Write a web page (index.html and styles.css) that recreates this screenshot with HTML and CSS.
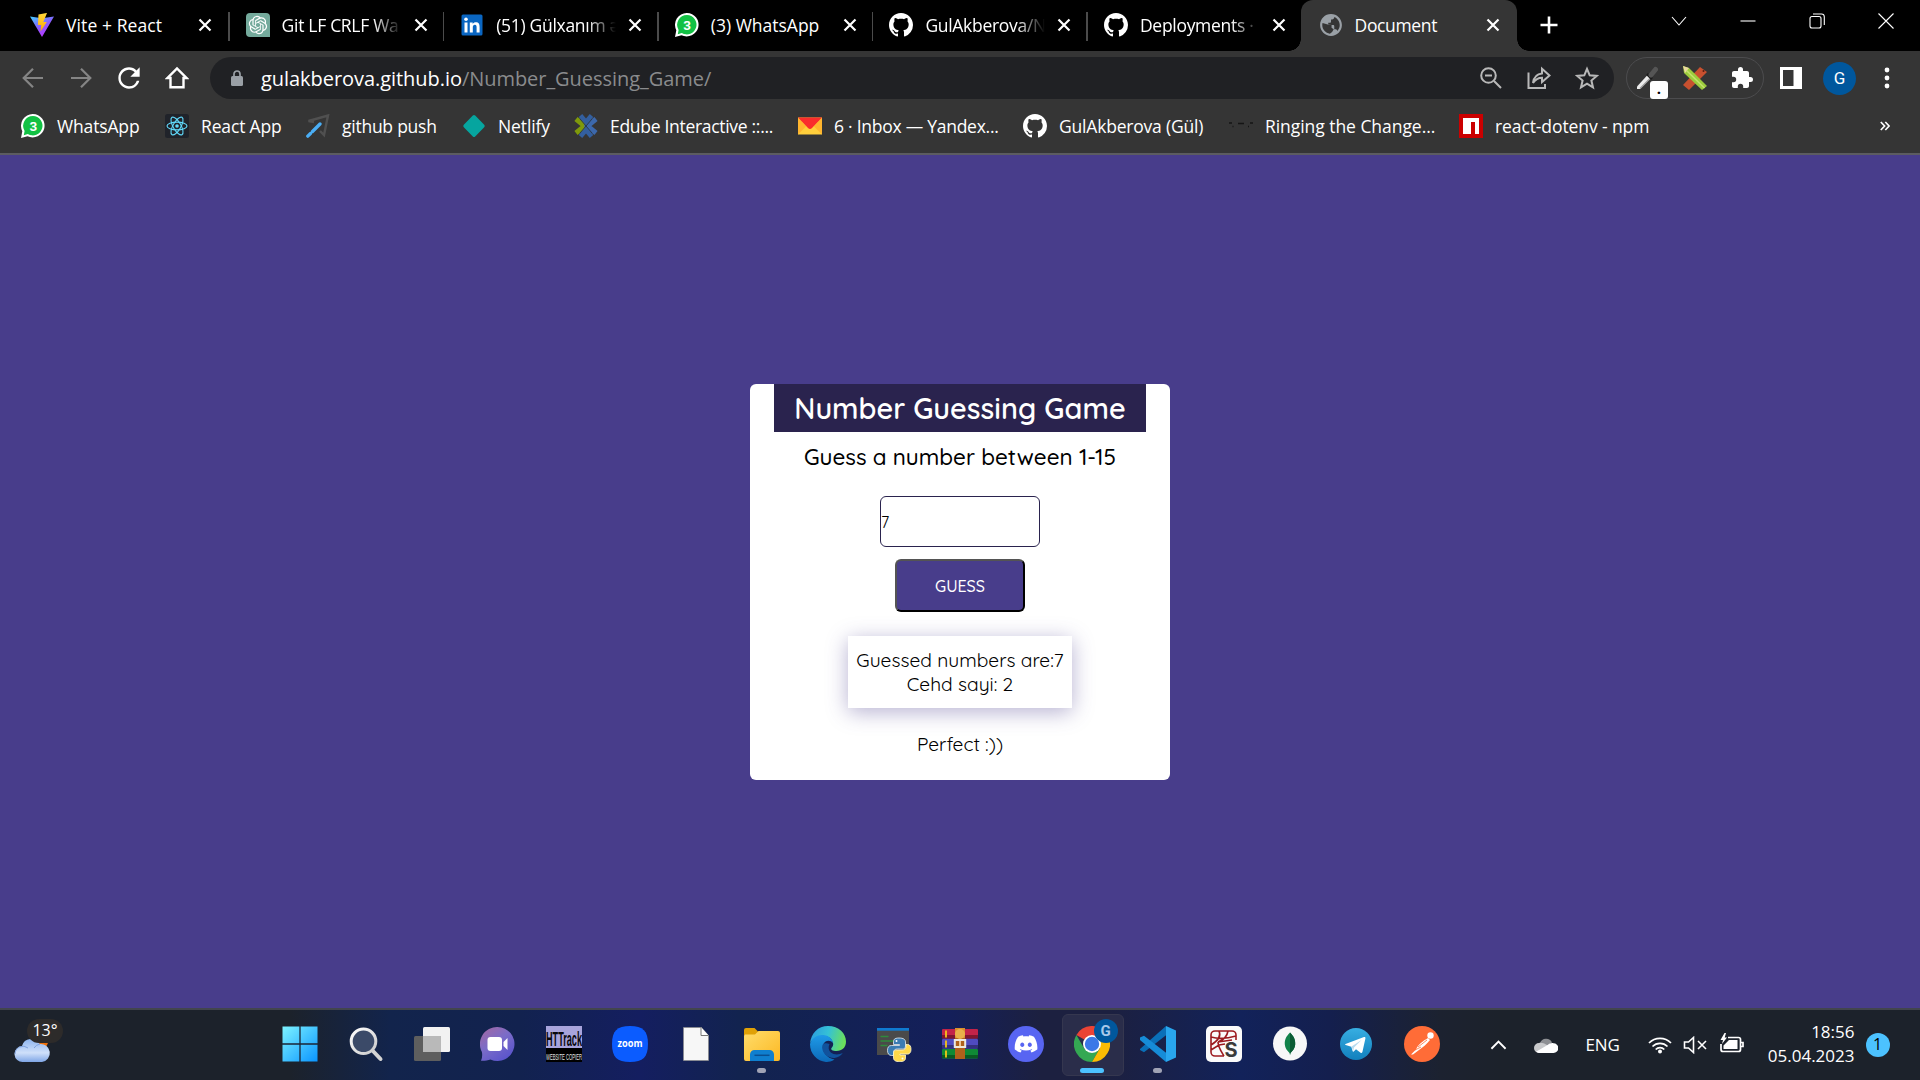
FILE: index.html
```html
<!DOCTYPE html>
<html lang="en">
<head>
<meta charset="utf-8">
<title>Document</title>
<link rel="stylesheet" href="styles.css">
</head>
<body>
<svg class="defs" aria-hidden="true">
  <defs>
    <linearGradient id="g-vite" x1="0" y1="0" x2="0.6" y2="1"><stop offset="0" stop-color="#41d1ff"/><stop offset="0.55" stop-color="#8a5cff"/><stop offset="1" stop-color="#bd34fe"/></linearGradient>
    <linearGradient id="g-bolt" x1="0" y1="0" x2="0" y2="1"><stop offset="0" stop-color="#ffd83a"/><stop offset="1" stop-color="#ffa800"/></linearGradient>
    <linearGradient id="g-win" x1="0" y1="0" x2="1" y2="1"><stop offset="0" stop-color="#7df3ff"/><stop offset="1" stop-color="#0a95ff"/></linearGradient>
    <linearGradient id="g-chat" x1="0" y1="0" x2="0.7" y2="1"><stop offset="0" stop-color="#a5679f"/><stop offset="0.5" stop-color="#7b6cc8"/><stop offset="1" stop-color="#5a54cc"/></linearGradient>
    <linearGradient id="g-folder" x1="0" y1="0" x2="1" y2="1"><stop offset="0" stop-color="#ffdd6b"/><stop offset="1" stop-color="#fcb823"/></linearGradient>
    <linearGradient id="g-edge" x1="0" y1="0.2" x2="1" y2="0.4"><stop offset="0" stop-color="#2a9be0"/><stop offset="0.5" stop-color="#35c1d6"/><stop offset="1" stop-color="#6be05a"/></linearGradient>
    <linearGradient id="g-edge2" x1="0" y1="0" x2="0" y2="1"><stop offset="0" stop-color="#1f9be8"/><stop offset="1" stop-color="#0c69b8"/></linearGradient>
    <linearGradient id="g-tele" x1="0" y1="0" x2="0" y2="1"><stop offset="0" stop-color="#37aee2"/><stop offset="1" stop-color="#1280bd"/></linearGradient>
    <linearGradient id="g-cloud" x1="0" y1="0" x2="0" y2="1"><stop offset="0" stop-color="#8db4ee"/><stop offset="0.6" stop-color="#cfe0fa"/><stop offset="1" stop-color="#7fa6e6"/></linearGradient>
    <linearGradient id="g-lens" x1="0" y1="0" x2="1" y2="1"><stop offset="0" stop-color="#ffffff"/><stop offset="1" stop-color="#c9c9c9"/></linearGradient>
  </defs>
  <symbol id="i-github" viewBox="0 0 16 16"><path fill="#fff" d="M8 0C3.58 0 0 3.58 0 8c0 3.54 2.29 6.53 5.47 7.59.4.07.55-.17.55-.38 0-.19-.01-.82-.01-1.49-2.01.37-2.53-.49-2.69-.94-.09-.23-.48-.94-.82-1.13-.28-.15-.68-.52-.01-.53.63-.01 1.08.58 1.23.82.72 1.21 1.87.87 2.33.66.07-.52.28-.87.51-1.07-1.78-.2-3.64-.89-3.64-3.95 0-.87.31-1.59.82-2.15-.08-.2-.36-1.02.08-2.12 0 0 .67-.21 2.2.82.64-.18 1.32-.27 2-.27s1.36.09 2 .27c1.53-1.04 2.2-.82 2.2-.82.44 1.1.16 1.92.08 2.12.51.56.82 1.27.82 2.15 0 3.07-1.87 3.75-3.65 3.95.29.25.54.73.54 1.48 0 1.07-.01 1.93-.01 2.2 0 .21.15.46.55.38A8.01 8.01 0 0 0 16 8c0-4.42-3.58-8-8-8z"/></symbol>
  <symbol id="i-whatsapp" viewBox="0 0 24 24"><path fill="#fff" d="M12 0a12 11.700 0 1 1-5.500 22.300L0 24l1.300-6.800A11.800 11.800 0 0 1 12 0z"/><path fill="#12c144" d="M12 2a9.800 9.700 0 1 1-5.200 18.100L2.800 21.200l.8-4.300A9.800 9.800 0 0 1 12 2z"/><text class="wa-count" x="12.200" y="17.200">3</text></symbol>
  <symbol id="i-close" viewBox="0 0 14 14"><path d="M1.500 1.500l11 11M12.500 1.500l-11 11" stroke="#fff" stroke-width="2.200" fill="none"/></symbol>
</svg>

<div class="screen">
  <header class="browser">
    <div class="tabstrip">
      <div class="tab first">
        <svg class="fav" viewBox="0 0 24 24"><path fill="url(#g-vite)" d="M0 3.500l12 1.800 12-1.800L12 24z"/><path fill="url(#g-bolt)" d="M16.500 0L8.500 1.500l-.6 10.500h3.300l-.7 6.500 6.300-9.500h-3.500L17 0z"/></svg>
        <span class="label vite">Vite + React</span><svg class="close"><use href="#i-close"/></svg>
      </div>
      <div class="tab">
        <svg class="fav" viewBox="0 0 24 24"><path fill="#74aa9c" d="M4 0h16a4 4 0 0 1 4 4v20H4a4 4 0 0 1-4-4V4a4 4 0 0 1 4-4z"/><g transform="translate(2.800 2.800) scale(.765)"><path fill="#fff" d="M22.2819 9.8211a5.9847 5.9847 0 0 0-.5157-4.9108 6.0462 6.0462 0 0 0-6.5098-2.9A6.0651 6.0651 0 0 0 4.9807 4.1818a5.9847 5.9847 0 0 0-3.9977 2.9 6.0462 6.0462 0 0 0 .7427 7.0966 5.98 5.98 0 0 0 .511 4.9107 6.051 6.051 0 0 0 6.5146 2.9001A5.9847 5.9847 0 0 0 13.2599 24a6.0557 6.0557 0 0 0 5.7718-4.2058 5.9894 5.9894 0 0 0 3.9977-2.9001 6.0557 6.0557 0 0 0-.7475-7.0729zm-9.022 12.6081a4.4755 4.4755 0 0 1-2.8764-1.0408l.1419-.0804 4.7783-2.7582a.7948.7948 0 0 0 .3927-.6813v-6.7369l2.02 1.1686a.071.071 0 0 1 .038.052v5.5826a4.504 4.504 0 0 1-4.4945 4.4944zm-9.6607-4.1254a4.4708 4.4708 0 0 1-.5346-3.0137l.142.0852 4.783 2.7582a.7712.7712 0 0 0 .7806 0l5.8428-3.3685v2.3324a.0804.0804 0 0 1-.0332.0615L9.74 19.9502a4.4992 4.4992 0 0 1-6.1408-1.6464zM2.3408 7.8956a4.485 4.485 0 0 1 2.3655-1.9728V11.6a.7664.7664 0 0 0 .3879.6765l5.8144 3.3543-2.0201 1.1685a.0757.0757 0 0 1-.071 0l-4.8303-2.7865A4.504 4.504 0 0 1 2.3408 7.872zm16.5963 3.8558L13.1038 8.364 15.1192 7.2a.0757.0757 0 0 1 .071 0l4.8303 2.7913a4.4944 4.4944 0 0 1-.6765 8.1042v-5.6772a.79.79 0 0 0-.407-.667zm2.0107-3.0231l-.142-.0852-4.7735-2.7818a.7759.7759 0 0 0-.7854 0L9.409 9.2297V6.8974a.0662.0662 0 0 1 .0284-.0615l4.8303-2.7866a4.4992 4.4992 0 0 1 6.6802 4.66zM8.3065 12.863l-2.02-1.1638a.0804.0804 0 0 1-.038-.0567V6.0742a4.4992 4.4992 0 0 1 7.3757-3.4537l-.142.0805L8.704 5.459a.7948.7948 0 0 0-.3927.6813zm1.0976-2.3654l2.602-1.4998 2.6069 1.4998v2.9994l-2.5974 1.4997-2.6067-1.4997Z"/></g></svg>
        <span class="label fade">Git LF CRLF Wa</span><svg class="close"><use href="#i-close"/></svg>
      </div>
      <div class="tab">
        <svg class="fav" viewBox="0 0 24 24"><rect x="1.500" y="1.500" width="21" height="21" rx="1.500" fill="#0a66c2"/><path fill="#fff" d="M4.500 9.500h3v10h-3zM9.800 9.500h2.900v1.400c.6-1 1.700-1.700 3.200-1.700 2.900 0 3.700 1.900 3.700 4.700v5.600h-3v-5.100c0-1.500-.3-2.600-1.700-2.600s-2.100 1-2.100 2.600v5.100h-3z"/><circle cx="6" cy="6.300" r="1.800" fill="#fff"/></svg>
        <span class="label fade">(51) Gülxanım ə</span><svg class="close"><use href="#i-close"/></svg>
      </div>
      <div class="tab">
        <svg class="fav"><use href="#i-whatsapp"/></svg>
        <span class="label">(3) WhatsApp</span><svg class="close"><use href="#i-close"/></svg>
      </div>
      <div class="tab">
        <svg class="fav"><use href="#i-github"/></svg>
        <span class="label fade">GulAkberova/N</span><svg class="close"><use href="#i-close"/></svg>
      </div>
      <div class="tab last">
        <svg class="fav"><use href="#i-github"/></svg>
        <span class="label fade">Deployments ·</span><svg class="close"><use href="#i-close"/></svg>
      </div>
      <div class="tab active">
        <svg class="fav" viewBox="1 1 22 22"><path fill="#9aa0a6" d="M12 2C6.480 2 2 6.480 2 12s4.480 10 10 10 10-4.480 10-10S17.520 2 12 2zm-1 17.930c-3.950-.49-7-3.850-7-7.930 0-.62.08-1.210.21-1.790L9 11.500l3.500.5v2.500l2 1.500-1.500 2.500-2 1.430zm6.900-2.540c-.26-.81-1-1.390-1.900-1.390h-1v-3c0-.55-.45-1-1-1H9.500v-2h1.500c.55 0 1-.45 1-1V7h1c1.100 0 2-.9 2-2v-.41c2.930 1.190 5 4.060 5 7.410 0 2.080-.8 3.970-2.100 5.390z"/></svg>
        <span class="label document">Document</span><svg class="close"><use href="#i-close"/></svg>
      </div>
      <svg class="newtab" viewBox="0 0 18 18"><path d="M9 .5v17M.5 9h17" stroke="#fff" stroke-width="2.600"/></svg>
      <div class="winctl">
        <svg viewBox="0 0 16 16"><path d="M1 4l7 8 7-8"/></svg>
        <svg viewBox="0 0 16 16"><path d="M.5 8h15"/></svg>
        <svg viewBox="0 0 16 16"><rect x="1" y="3.500" width="11" height="11.500" rx="2"/><path d="M4 1h8.500A2.800 2.800 0 0 1 15.300 3.800V12"/></svg>
        <svg viewBox="0 0 16 16"><path d="M.5.5l15 15M15.500.5l-15 15"/></svg>
      </div>
    </div>

    <div class="toolbar">
      <div class="nav">
        <svg class="dim" viewBox="0 0 24 24"><path d="M22 12H3M12 2.700L2.700 12l9.300 9.300"/></svg>
        <svg class="dim" viewBox="0 0 24 24"><path d="M2 12h19M12 2.700l9.300 9.300-9.300 9.300"/></svg>
        <svg viewBox="3 3 18 18"><path class="solid" d="M17.650 6.350A7.958 7.958 0 0 0 12 4c-4.420 0-7.990 3.580-7.990 8s3.570 8 7.990 8c3.730 0 6.840-2.550 7.730-6h-1.900A6.200 6.200 0 0 1 12 18.200c-3.400 0-6.200-2.800-6.200-6.200S8.600 5.800 12 5.800c1.660 0 3.240.79 4.320 1.880L13 11h7V4z"/></svg>
        <svg viewBox="0 0 24 24"><path class="bold" d="M5.500 21.300V12H2.500L12 2.500l9.500 9.500h-3v9.300z"/></svg>
      </div>
      <div class="omnibox">
        <svg class="lock" viewBox="0 0 12 16"><rect y="6" width="12" height="10" rx="1.500" fill="#9aa0a6"/><path d="M3 7V4a3 3 0 0 1 6 0v3" fill="none" stroke="#9aa0a6" stroke-width="1.700"/></svg>
        <span class="url"><b>gulakberova.github.io</b>/Number_Guessing_Game/</span>
        <div class="actions">
          <svg viewBox="0 0 24 24"><circle cx="9.500" cy="9.500" r="7.300"/><path d="M15 15l7 7M6 9.500h7"/></svg>
          <svg viewBox="0 0 24 24"><path d="M1.500 6.500V22h16.500v-4M6 17c.8-6 4-9.200 9-9.600V2.800L22.500 9.500 15 16v-4.300c-4 0-6.500 1.500-9 5.300z"/></svg>
          <svg viewBox="0 0 24 24"><path d="M12 2.800l2.700 6.500 7 .6-5.300 4.600 1.600 6.900-6-3.700-6 3.700 1.600-6.900-5.300-4.600 7-.6z"/></svg>
        </div>
      </div>
      <div class="extensions">
        <div class="picker"><svg viewBox="0 0 24 24"><path d="M2 20.500L13 8.500l3.500 3L5 23H2z" fill="#ececec"/><path d="M5 22.500L16 11.500" stroke="#9a9a9a" stroke-width="1.200"/><path d="M12 8l5 5" stroke="#1c1c1c" stroke-width="2.500"/><path d="M16 9l4.500-5.500" stroke="#555" stroke-width="5" stroke-linecap="round"/></svg><span class="chip">.</span></div>
        <svg viewBox="0 0 24 24"><path d="M17 1l7 5L6 24l-6-5z" fill="#c8502f"/><path d="M0 0l6 2 18 18-5 4L1 7z" fill="#9ccc3c"/><path d="M0 0l6 2-4 5z" fill="#ecd9a0"/><path d="M3.500 4.500L21.500 22" stroke="#c5e36e" stroke-width="1.500"/><circle cx="20.500" cy="5" r="1" fill="#5b1d10"/></svg>
        <svg viewBox="0 0 24 24"><path fill="#fff" d="M20.500 11H19V7c0-1.100-.9-2-2-2h-4V3.500a2.500 2.500 0 0 0-5 0V5H4c-1.100 0-2 .9-2 2v3.800h1.500a2.700 2.700 0 0 1 0 5.400H2V20c0 1.100.9 2 2 2h3.800v-1.500a2.700 2.700 0 0 1 5.400 0V22H17c1.100 0 2-.9 2-2v-4h1.500a2.500 2.500 0 0 0 0-5z"/></svg>
      </div>
      <svg class="panel" viewBox="0 0 22 22"><path fill="#fff" fill-rule="evenodd" d="M0 0h22v22H0zM3 3v16h10.500V3z"/></svg>
      <span class="avatar">G</span>
      <svg class="dots" viewBox="0 0 6 22"><circle cx="3" cy="3" r="2.400"/><circle cx="3" cy="11" r="2.400"/><circle cx="3" cy="19" r="2.400"/></svg>
    </div>

    <nav class="bookmarks">
      <a class="bm w1"><svg><use href="#i-whatsapp"/></svg>WhatsApp</a>
      <a class="bm w2"><svg viewBox="0 0 24 24"><rect width="24" height="24" rx="2.500" fill="#20232a"/><g fill="none" stroke="#61dafb" stroke-width="1.100"><ellipse cx="12" cy="12" rx="10" ry="3.900"/><ellipse cx="12" cy="12" rx="10" ry="3.900" transform="rotate(60 12 12)"/><ellipse cx="12" cy="12" rx="10" ry="3.900" transform="rotate(120 12 12)"/></g><circle cx="12" cy="12" r="1.800" fill="#61dafb"/></svg>React App</a>
      <a class="bm w3"><svg viewBox="0 0 24 24"><path d="M8 8L2.500 7 22 1.500 18 21l-4-4" fill="none" stroke="#505050" stroke-width="2.400"/><path d="M14 10l-7.500 7.500M4.500 19.500L1.800 22.200" stroke="#4aaef5" stroke-width="3.300" stroke-linecap="round"/></svg>github push</a>
      <a class="bm w4"><svg viewBox="0 0 24 24"><path fill="#06a59f" d="M10.800 1.500a1.700 1.700 0 0 1 2.400 0l9 9.300a1.700 1.700 0 0 1 0 2.400l-9 9.300a1.700 1.700 0 0 1-2.400 0l-9-9.300a1.700 1.700 0 0 1 0-2.400z"/></svg>Netlify</a>
      <a class="bm w5"><svg viewBox="0 0 24 24"><path d="M2 5l8.500 7L2 19" fill="none" stroke="#7f9a0b" stroke-width="5"/><path d="M22 5l-8.500 7 8.500 7" fill="none" stroke="#3c68ab" stroke-width="5"/><path d="M6.500 1.500L12 8l5.500-6.500M6.500 22.500L12 16l5.500 6.500" fill="none" stroke="#335f9f" stroke-width="4.500"/><path d="M6 5l12 14M18 5L6 19" stroke="#2c3a4c" stroke-width="1"/></svg>Edube Interactive ::...</a>
      <a class="bm w6"><svg viewBox="0 0 24 24"><path fill="#ffcf3c" d="M0 3.500h24v17H0z"/><path fill="#ffb52e" d="M0 3.500l8 9-8 8zM24 3.500l-8 9 8 8z"/><path fill="#fa2c2c" d="M0 3.500h24L14 14a2.800 2.800 0 0 1-4 0z"/></svg>6 · Inbox — Yandex...</a>
      <a class="bm w7"><svg><use href="#i-github"/></svg>GulAkberova (Gül)</a>
      <a class="bm w8"><svg viewBox="0 0 24 24"><path d="M0 9h3M9 9.500h6M21 9h3M3.500 12.500h1M19 12.500h1" stroke="#151515" stroke-width="1.600"/></svg>Ringing the Change...</a>
      <a class="bm w9"><svg viewBox="0 0 24 24"><path fill="#cb0000" d="M0 0h24v24H0z"/><path fill="#fff" d="M4 4h16v16h-4V8h-4v12H4z"/></svg>react-dotenv - npm</a>
      <svg class="more" viewBox="0 0 10 10"><path d="M.8 1l3.800 4L.8 9M5.300 1l3.800 4-3.800 4" fill="none" stroke="#fff" stroke-width="1.700"/></svg>
    </nav>
  </header>

  <main class="page">
    <section class="card">
      <h1>Number Guessing Game</h1>
      <h3>Guess a number between 1-15</h3>
      <input class="guess-input" type="text" value="7">
      <button class="guess-btn">GUESS</button>
      <div class="result"><p>Guessed numbers are:7</p><p>Cehd sayi: 2</p></div>
      <p class="message">Perfect :))</p>
    </section>
  </main>

  <footer class="taskbar">
    <div class="weather"><svg viewBox="0 0 38 26"><path d="M22 2h14l-4 8h-8z" fill="#f0720c"/><path fill="url(#g-cloud)" d="M9 25a8 8 0 0 1-1-16 9.500 9.500 0 0 1 17.500-2A9 9 0 1 1 28 25z"/><path d="M1 17a8 8 0 0 1 13-6M20 11a9 9 0 0 1 6-4" fill="none" stroke="#7fa2dd" stroke-width="1"/></svg><span class="temp">13°</span></div>
    <div class="apps">
      <span class="app"><svg viewBox="0 0 36 36"><path fill="url(#g-win)" d="M.5.500h35v35H.5z"/><path d="M18 0v36M0 18h36" stroke="#1b2536" stroke-width="1.300"/></svg></span>
      <span class="app"><svg viewBox="0 0 36 36"><path d="M24 24l8.500 9" stroke="#d4d4d4" stroke-width="4" stroke-linecap="round"/><circle cx="15.500" cy="15.300" r="12.300" fill="#3b4a68" stroke="url(#g-lens)" stroke-width="3"/></svg></span>
      <span class="app"><svg viewBox="0 0 36 36"><rect x="0" y="10" width="27" height="25" rx="1.500" fill="#5e5e5e"/><rect x="9" y="1" width="27" height="25" rx="1.500" fill="#f2f2f2"/><path d="M9 10h18v16H9z" fill="#b9b9b9"/></svg></span>
      <span class="app"><svg viewBox="0 0 36 36"><path fill="url(#g-chat)" d="M17.500 1a17 17 0 1 1-7 32.500c-3 1.200-6.500 1.500-9.500 1.300 1.300-3 1.500-6.300.8-9A17 17 0 0 1 17.500 1z"/><rect x="7.500" y="11" width="14.500" height="14" rx="3" fill="#fff"/><path fill="#fff" d="M23.500 16l4-4v12l-4-4z"/></svg></span>
      <span class="app"><svg viewBox="0 0 36 36"><path fill="#a8a4dc" d="M0 0h36v22H0z"/><path fill="#000" d="M0 22h36v14H0z"/><text class="ht-top" x="0" y="20" textLength="36" lengthAdjust="spacingAndGlyphs">HTTrack</text><text class="ht-bot" x="0" y="33.500" textLength="36" lengthAdjust="spacingAndGlyphs">WEBSITE COPIER</text></svg></span>
      <span class="app"><svg viewBox="0 0 36 36"><path fill="#0b5cff" d="M18 0c13 0 18 5 18 18s-5 18-18 18S0 31 0 18 5 0 18 0z"/><text class="zoom-word" x="18" y="21" textLength="25" lengthAdjust="spacingAndGlyphs">zoom</text></svg></span>
      <span class="app"><svg viewBox="0 0 36 36"><path d="M5.500 1.500h18l7 8v25h-25z" fill="#f7f7f7" stroke="#8b8b8b" stroke-width=".7"/><path d="M23 1.500V9.500h7.500" fill="#fff" stroke="#777" stroke-width="1"/></svg></span>
      <span class="app open"><svg viewBox="0 0 36 36"><path d="M0 4a2 2 0 0 1 2-2h8.500L14.500 6v4H0z" fill="#e0a106"/><path d="M0 10L1 8.500h10L14.500 5H34a2 2 0 0 1 2 2v26a2 2 0 0 1-2 2H2a2 2 0 0 1-2-2z" fill="url(#g-folder)"/><path d="M6 35v-6.500A4.500 4.500 0 0 1 10.500 24h15a4.500 4.500 0 0 1 4.500 4.500V35z" fill="#0f7fcf"/><path d="M10.500 29.300h15" stroke="#0a4f91" stroke-width="1.500"/></svg></span>
      <span class="app"><svg viewBox="0 0 36 36"><path fill="url(#g-edge)" d="M0 18C1 7 8 0 18 0c11 0 18 7.500 18 15.500 0 6-4 9.500-9.500 9.500-4 0-6-1.300-5-3 1.500-2 2-3 1.500-5C22 12 17 9 11 10 5 11 1.500 14 0 18z"/><path fill="url(#g-edge2)" d="M0 18C2 12 7 9 12 9c6 0 10.500 3.500 11 8-2.500-3.500-8.500-3-10 2-1.500 6 4 13.500 11.500 14.500C21 36 17.500 36 16 35.900 7 35 0 28 0 18z"/><path fill="#11529c" d="M12.500 19c-2 8 6 13.500 12 13 4-.5 6.500-2.500 8.300-5-4 2-9 2-12-.5-2.300-2-2.800-5-1.300-8.500-3-1.500-6-1-7 1z"/></svg></span>
      <span class="app"><svg viewBox="0 0 36 36"><path fill="#4a4a4a" d="M1 2h32v27H1z"/><path fill="#0f7ad0" d="M1 2h32v2.700H1z"/><path d="M4.500 10.500h8M4.500 15h13M4.500 19.500h7" stroke="#2f8a3c" stroke-width="1.300"/><path fill="#3b7bb3" stroke="#e8eef4" stroke-width=".8" d="M23 12c-5 0-5.500 2-5.500 4v2.500h6v1h-8c-3 0-4 2-4 5s1.500 5 4 5h2v-3c0-2.500 1.500-3.500 4-3.500h5c2 0 3-1 3-3v-4c0-2.500-2-4-6.500-4z"/><path fill="#ffd94a" stroke="#fdf6d4" stroke-width=".8" d="M30 18.500h1.500c3 0 3.500 2.500 3.500 5s-1 4.500-3.500 4.500H24v1h5.500v3c0 2.500-2 3.700-6 3.700s-6-1.500-6-3.700v-5c0-2 1-3 3-3H26c2.500 0 4-1.500 4-3.500z"/><circle cx="20.500" cy="15" r="1" fill="#fff"/><circle cx="26.500" cy="32.500" r="1" fill="#fff"/></svg></span>
      <span class="app"><svg viewBox="0 0 36 36"><rect y="3" width="36" height="9.500" rx="1" fill="#c22349"/><rect y="13" width="36" height="9.500" rx="1" fill="#4f4bc0"/><rect y="23" width="36" height="9.500" rx="1" fill="#0f8a35"/><path d="M0 10.500h36M0 20.500h36M0 30.500h36" stroke="#000" stroke-opacity=".35" stroke-width="3"/><path d="M4 4.500v7M4 14.500v7M4 24.500v7" stroke="#f5c518" stroke-width="1.800"/><path fill="#d98f2b" d="M13 2h10v10H13z"/><path fill="#b0611b" d="M13 12h10v21H13z"/><circle cx="18" cy="8" r="5" fill="#e8b04a"/><rect x="12.800" y="14" width="10.400" height="7" fill="none" stroke="#ece8e0" stroke-width="2"/><path d="M18 15v7" stroke="#ffe9c0" stroke-width="1.500"/></svg></span>
      <span class="app"><svg viewBox="0 0 36 36"><circle cx="18" cy="18" r="18" fill="#5865f2"/><g transform="translate(6.700 6.500) scale(.945)"><path fill="#fff" d="M20.317 4.3698a19.7913 19.7913 0 00-4.8851-1.5152.0741.0741 0 00-.0785.0371c-.211.3753-.4447.8648-.6083 1.2495-1.8447-.2762-3.68-.2762-5.4868 0-.1636-.3933-.4058-.8742-.6177-1.2495a.077.077 0 00-.0785-.037 19.7363 19.7363 0 00-4.8852 1.515.0699.0699 0 00-.0321.0277C.5334 9.0458-.319 13.5799.0992 18.0578a.0824.0824 0 00.0312.0561c2.0528 1.5076 4.0413 2.4228 5.9929 3.0294a.0777.0777 0 00.0842-.0276c.4616-.6304.8731-1.2952 1.226-1.9942a.076.076 0 00-.0416-.1057c-.6528-.2476-1.2743-.5495-1.8722-.8923a.077.077 0 01-.0076-.1277c.1258-.0943.2517-.1923.3718-.2914a.0743.0743 0 01.0776-.0105c3.9278 1.7933 8.18 1.7933 12.0614 0a.0739.0739 0 01.0785.0095c.1202.099.246.1981.3728.2924a.077.077 0 01-.0066.1276 12.2986 12.2986 0 01-1.873.8914.0766.0766 0 00-.0407.1067c.3604.698.7719 1.3628 1.225 1.9932a.076.076 0 00.0842.0286c1.961-.6067 3.9495-1.5219 6.0023-3.0294a.077.077 0 00.0313-.0552c.5004-5.177-.8382-9.6739-3.5485-13.6604a.061.061 0 00-.0312-.0286zM8.02 15.3312c-1.1825 0-2.1569-1.0857-2.1569-2.419 0-1.3332.9555-2.4189 2.157-2.4189 1.2108 0 2.1757 1.0952 2.1568 2.419 0 1.3332-.9555 2.4189-2.1569 2.4189zm7.9748 0c-1.1825 0-2.1569-1.0857-2.1569-2.419 0-1.3332.9554-2.4189 2.1569-2.4189 1.2108 0 2.1757 1.0952 2.1568 2.419 0 1.3332-.946 2.4189-2.1568 2.4189Z"/></g></svg></span>
      <span class="app open focused"><svg viewBox="0 0 36 36"><path fill="#ea4335" d="M18 18L2.400 9a18 18 0 0 1 31.200 0z"/><path fill="#34a853" d="M18 36A18 18 0 0 1 2.400 9l7.800 13.500L18 27l7.800-4.500z"/><path fill="#fbbc04" d="M18 36l7.800-13.500V9h7.800A18 18 0 0 1 18 36z"/><circle cx="18" cy="18" r="9" fill="#fff"/><circle cx="18" cy="18" r="7.200" fill="#3b78e7"/></svg><span class="profile">G</span></span>
      <span class="app open"><svg viewBox="0 0 36 36"><path fill="#0a6fb8" d="M26 0L0 23v1l4 2.300L27 8.500z"/><path fill="#168cd8" d="M0 12.500v-1L4 9.700 27 27.500 26 36 0 14z"/><path fill="#29a6ee" d="M26 0l10 4.500v27L26 36z"/></svg></span>
      <span class="app"><svg viewBox="0 0 36 36"><rect width="36" height="36" rx="5" fill="#fafafa"/><path d="M30 14V9a4 4 0 0 0-4-4H9a4 4 0 0 0-4 4v17a4 4 0 0 0 4 4h9M5 11c7 2 15 2 25-1M13 5c2 4 0 9-8 14M22 5c-1 6-4 9-10 11M12 16c0 5 3 9 6 14M12 16l14-2M5 24l8-5 6-1" fill="none" stroke="#9c1a1f" stroke-width="1.600"/><text class="spy-s" x="25" y="31">S</text></svg></span>
      <span class="app"><svg viewBox="0 0 36 36"><circle cx="18" cy="17.500" r="17" fill="#f7f7f7"/><path fill="#12824a" d="M18 6.500c-4 4-5.500 7.500-5.200 12 .3 3.500 2.200 6 4.700 8.500l.5 2 .5-2c2.500-2.500 4.400-5 4.700-8.500.3-4.500-1.200-8-5.200-12z"/><path fill="#0b5b34" d="M18 6.500v22.500l.5-2c2.500-2.500 4.400-5 4.700-8.500.3-4.500-1.200-8-5.200-12z"/></svg></span>
      <span class="app"><svg viewBox="0 0 36 36"><circle cx="18" cy="18" r="16" fill="url(#g-tele)"/><path fill="#fff" d="M7.500 18L26 11c1-.3 1.700.2 1.400 1.500l-3 13.500c-.3 1-1 1.200-1.800.8L18 23.300l-2.300 2.200c-.5.500-1 .4-1.100-.4l-1.300-4.400-5.600-1.700c-.8-.3-.8-.7-.2-1z"/><path d="M13.500 20.500L23.500 14l-7.500 7.500-.8 3.500" fill="#b9dcf0"/></svg></span>
      <span class="app"><svg viewBox="0 0 36 36"><circle cx="18" cy="18" r="18" fill="#ff6c37"/><circle cx="26.500" cy="9.500" r="3.200" fill="#fff"/><path fill="#fff" d="M24 12l2 2c-3 4-7 7-11 10l-6 4.500H7l5-5c2-5 7-8.500 12-11.500z"/><path d="M14 21l9-7M11 24l6-3" stroke="#ff6c37" stroke-width=".8"/></svg></span>
    </div>
    <div class="tray">
      <svg class="chev" viewBox="0 0 18 10"><path d="M1.500 9L9 1.500 16.500 9" fill="none" stroke="#fff" stroke-width="2"/></svg>
      <svg class="onedrive" viewBox="0 0 24 16"><path fill="#8e9094" d="M6 6a6.500 6.500 0 0 1 12-.5l-5 4z"/><path fill="#c9cacc" d="M5 16A5 5 0 0 1 5 6c2-.8 5 0 7 1.500L22 13z"/><path fill="#fff" d="M5 16h14.500a4.800 4.800 0 0 0 0-9.700c-1.500-.8-4 0-5.500 1.500L2 14.800A5 5 0 0 0 5 16z"/></svg>
      <span class="lang">ENG</span>
      <svg class="wifi" viewBox="0 0 24 18"><g fill="none" stroke="#fff" stroke-width="1.700"><path d="M1 7a15.500 15.500 0 0 1 22 0"/><path d="M4.500 10.500a10.600 10.600 0 0 1 15 0"/><path d="M7.700 13.500a6 6 0 0 1 8.600 0"/></g><circle cx="12" cy="15.500" r="2" fill="#fff"/></svg>
      <svg class="mute" viewBox="0 0 24 18"><path d="M1.500 6h4l5-4.500v15L5.500 12h-4zM15 5l8 8M23 5l-8 8" fill="none" stroke="#fff" stroke-width="1.600"/></svg>
      <svg class="battery" viewBox="0 0 24 20"><path d="M8 4.500h10.500a2 2 0 0 1 2 2v10a2 2 0 0 1-2 2H3a2 2 0 0 1-2-2V11M21 9.500h2v4h-2" fill="none" stroke="#fff" stroke-width="1.700"/><path fill="#fff" d="M9 7h8.500v9h-14v-3.500zM4.500 0L.5 7H3L2 11l5-6.500H4.700L6 0z"/></svg>
      <div class="clock"><span>18:56</span><span>05.04.2023</span></div>
      <span class="notif">1</span>
    </div>
  </footer>
</div>
</body>
</html>
```
FILE: styles.css
```css
* { box-sizing: border-box; }
body { margin: 0; background: #483d8b; font-family: "Open Sans", "Noto Sans", sans-serif; }
svg { display: block; flex: none; }
.defs { position: absolute; width: 0; height: 0; }
.screen { width: 1920px; height: 1080px; display: flex; flex-direction: column; overflow: hidden; }

/* Browser frame */
.browser { height: 155px; background: #353535; border-bottom: 2px solid #5c5c60; color: #fff; flex: none; }
.tabstrip { display: flex; height: 51px; background: #000; padding-left: 14px; }
.tab { position: relative; display: flex; align-items: center; width: 214.6px; height: 51px; padding: 0 0 1px 17px; flex: none; font-size: 17.5px; }
.tab.first { padding-left: 16px; }
.tab::after { content: ""; position: absolute; right: -1px; top: 12px; width: 1.5px; height: 29px; background: #4b4b4b; }
.tab.last { width: 213.6px; }
.tab.last::after { display: none; }
.fav { width: 24px; height: 24px; margin-right: 12px; }
.label { width: 120px; white-space: nowrap; overflow: hidden; line-height: 24px; }
.label.vite { letter-spacing: .1px; }
.label.document { letter-spacing: -.35px; }
.label.fade { letter-spacing: -.3px; -webkit-mask-image: linear-gradient(90deg, #000 76%, transparent 100%); mask-image: linear-gradient(90deg, #000 76%, transparent 100%); }
.close { width: 14px; height: 14px; margin-left: 12px; }
.tab.active { width: 216px; background: #353535; border-radius: 12px 12px 0 0; padding-left: 18px; }
.tab.active .close { margin-left: 11px; }
.tab.active::before, .tab.active::after { content: ""; position: absolute; top: auto; bottom: 0; width: 12px; height: 12px; }
.tab.active::before { left: -12px; background: radial-gradient(circle at 0 0, transparent 11.5px, #353535 12px); }
.tab.active::after { right: -12px; background: radial-gradient(circle at 100% 0, transparent 11.5px, #353535 12px); }
.newtab { width: 18px; height: 18px; margin: 16px 0 0 23px; }
.winctl { display: flex; gap: 53px; margin: 13px 0 0 113px; }
.winctl svg { width: 16px; height: 16px; fill: none; stroke: #fff; stroke-width: 1.1; }

.toolbar { display: flex; align-items: center; height: 54px; }
.nav { display: flex; gap: 24px; padding-left: 21px; width: 210px; }
.nav svg { width: 24px; height: 24px; fill: none; stroke: #fff; stroke-width: 2.2; }
.nav .dim { stroke: #858585; }
.nav .solid { fill: #fff; stroke: none; }
.nav .bold { stroke-width: 2.4; }
.omnibox { display: flex; align-items: center; width: 1404px; height: 42px; border-radius: 21px; background: #202124; padding-left: 21px; }
.lock { width: 12px; height: 16px; margin-right: 18px; }
.url { font-size: 20px; letter-spacing: -.05px; color: #8a8b8d; flex: 1; line-height: 28px; padding-top: 1px; }
.url b { font-weight: 400; color: #fff; }
.actions { display: flex; gap: 24px; padding-right: 15px; }
.actions svg { width: 24px; height: 24px; fill: none; stroke: #b8b8b8; stroke-width: 2; }
.extensions { display: flex; align-items: center; gap: 23.5px; width: 138px; height: 42px; margin-left: 12px; padding-left: 8px; border: 1.5px solid #4c4c4e; border-radius: 21px; }
.extensions svg { width: 24px; height: 24px; }
.picker { position: relative; width: 24px; height: 24px; }
.chip { position: absolute; left: 15px; top: 15px; width: 18px; height: 18px; border-radius: 3px; background: #fff; color: #000; font: 700 15px/15px "Open Sans", sans-serif; text-align: center; }
.panel { width: 22px; height: 22px; margin-left: 16px; }
.avatar { width: 33px; height: 33px; margin-left: 21px; border-radius: 50%; background: #00579d; font: 17px/33px Roboto, sans-serif; text-align: center; }
.dots { width: 6px; height: 22px; margin-left: 28px; fill: #fff; }

.bookmarks { display: flex; align-items: center; height: 42px; padding-left: 21px; font-size: 17.5px; }
.bm { display: flex; align-items: center; gap: 12px; white-space: nowrap; flex: none; line-height: 24px; }
.bm svg { width: 24px; height: 24px; }
.w1 { width: 144px; letter-spacing: -.15px; }
.w2 { width: 141px; letter-spacing: -.15px; }
.w3 { width: 156px; letter-spacing: -.25px; }
.w4 { width: 112px; letter-spacing: -.1px; }
.w5 { width: 224px; letter-spacing: -.3px; }
.w6 { width: 225px; letter-spacing: -.26px; }
.w7 { width: 206px; letter-spacing: -.2px; }
.w8 { width: 230px; letter-spacing: -.05px; }
.w9 { width: 421px; letter-spacing: -.1px; }
.more { width: 10px; height: 10px; }

/* Game */
.page { flex: 1; display: flex; align-items: flex-start; justify-content: center; padding-top: 229px; background: #483d8b; font-family: Quicksand, Lato, sans-serif; }
.card { width: 420px; height: 396px; background: #fff; border-radius: 6px; display: flex; flex-direction: column; align-items: center; color: #000; }
.card h1 { margin: 0; width: 372px; height: 48px; background: #2a234e; color: #fff; font-size: 28.8px; line-height: 49px; font-weight: 600; text-align: center; }
.card h3 { margin: 12px 0 25px; font-size: 22.46px; line-height: 27px; font-weight: 500; }
.guess-input { width: 160px; height: 51px; margin: 0 0 12px; padding: 1px 0; border: 1px solid #2a234e; border-radius: 6px; background: #fff; font: 400 16px Quicksand, Lato, sans-serif; color: #000; }
.guess-btn { width: 130px; height: 53px; padding: 0; border: 2px outset #000; border-radius: 6px; background: #483d8b; color: #fff; font: 500 16px Quicksand, Lato, sans-serif; }
.result { width: 224px; height: 72px; margin-top: 24px; padding-top: 12px; background: #fff; box-shadow: 0 4px 20px rgba(72, 61, 139, .4); text-align: center; }
.result p, .message { margin: 0; font-size: 19.2px; line-height: 24px; font-weight: 400; white-space: nowrap; }
.message { margin-top: 24px; }

/* Taskbar */
.taskbar { display: flex; height: 72px; flex: none; color: #fff; border-top: 2px solid #42454d;
  background: linear-gradient(90deg, #1c222b 0, #1c222b 290px, #12244c 390px, #12224f 520px, #141e60 640px, #12234f 740px, #141f5a 950px, #1c2040 1040px, #1c2040 1110px, #12225a 1240px, #141f4e 1330px, #1c2230 1440px, #1c222b 1500px); }
.weather { position: relative; width: 266.5px; padding: 27px 0 0 14px; flex: none; }
.weather svg { width: 38px; height: 26px; }
.temp { position: absolute; left: 27px; top: 9px; width: 36px; height: 24px; border-radius: 12px; background: #2d2b2a; font-size: 16px; line-height: 23px; text-align: center; }
.apps { display: flex; width: 1188px; flex: none; }
.app { position: relative; width: 66px; height: 70px; display: flex; justify-content: center; padding-top: 16px; }
.app svg { width: 36px; height: 36px; position: relative; }
.app.open::after { content: ""; position: absolute; left: 28.5px; top: 58px; width: 9px; height: 5px; border-radius: 3px; background: #a0a3b5; }
.app.focused::before { content: ""; position: absolute; left: 3px; top: 4px; width: 60px; height: 60px; border-radius: 6px; background: #2a2d4a; border: 1px solid #35374f; }
.app.focused::after { left: 21px; width: 24px; background: #4cc2ff; }
.profile { position: absolute; left: 35px; top: 9px; width: 24px; height: 24px; border-radius: 50%; background: #00579d; color: #a9c9ea; font: 700 15px/24px Roboto, sans-serif; text-align: center; }
.wa-count { font: 700 13.5px Roboto, sans-serif; fill: #fff; text-anchor: middle; }
.ht-top { font: 700 21px "Liberation Sans", sans-serif; fill: #08080c; }
.ht-bot { font: 9px "Liberation Sans", sans-serif; fill: #e6e6e6; }
.zoom-word { font: 700 10.5px "Open Sans", sans-serif; fill: #fff; text-anchor: middle; }
.spy-s { font: 700 20px Inter, sans-serif; fill: #3a3a3a; text-anchor: middle; }

.tray { display: flex; align-items: center; padding-left: 35px; height: 69px; }
.chev { width: 17px; height: 10px; margin-right: 27px; }
.onedrive { width: 24px; height: 16px; margin-right: 28px; }
.lang { width: 62px; font-size: 17px; letter-spacing: -.1px; }
.wifi { width: 24px; height: 18px; margin-right: 11px; }
.mute { width: 24px; height: 18px; margin-right: 13px; }
.battery { width: 24px; height: 20px; margin: -4px 23px 0 0; }
.clock { display: flex; flex-direction: column; align-items: flex-end; width: 88px; font-size: 17px; line-height: 24px; padding-bottom: 2px; }
.notif { width: 24px; height: 24px; margin-left: 11px; border-radius: 50%; background: #4cc2ff; color: #000; font-size: 16px; line-height: 23px; text-align: center; }
```
